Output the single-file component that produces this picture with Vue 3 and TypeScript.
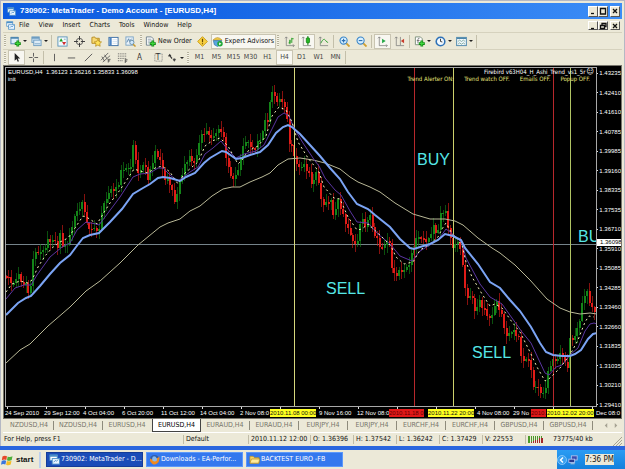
<script setup lang="ts">
import { ref } from 'vue'

type Point = [number, number]
interface Tool { icon: string; name: string; label?: string; drop?: boolean; pressed?: boolean; kind?: 'grip' | 'sep' }

const icons: Record<string, string> = {
  app: '<rect x="1" y="1" width="8" height="6" fill="#fff" stroke="#4a8fc8"/><rect x="1" y="1" width="8" height="2" fill="#4a8fc8"/><rect x="3.5" y="5" width="8" height="6" fill="#e8f4ff" stroke="#4a8fc8"/><path d="M5 9l2-2 1 1 2-2" stroke="#4a8fc8" fill="none"/>',
  newChart: '<rect x="1" y="1.500" width="8" height="7" fill="#dbeefb" stroke="#4e86b0"/><path d="M1 2h8" stroke="#4e86b0" stroke-width="2"/><path d="M8.500 5v6.500M5.200 8.200h6.600" stroke="#178a17" stroke-width="3"/><path d="M8.500 5.700v5M6 8.200h5" stroke="#3dd83d" stroke-width="1.300"/>',
  profiles: '<rect x="1" y="1" width="8" height="6" fill="#cfe4f4" stroke="#6d9cc0"/><path d="M1 2h8" stroke="#6d9cc0" stroke-width="2"/><rect x="3" y="4.500" width="8" height="6" fill="#dcebf6" stroke="#6d9cc0"/><path d="M4 8.500h6" stroke="#7da7c6"/>',
  market: '<rect x="1" y="1" width="10" height="10" fill="#f4faff" stroke="#5a94b8"/><path d="M2.500 6l2-3.500L6.500 6z" fill="#20a020"/><path d="M5.500 6.500h4.500L7.700 10z" fill="#d03030"/><path d="M7.500 3.500h2" stroke="#7aa"/>',
  cross: '<circle cx="6" cy="6" r="3.500" fill="none" stroke="#555"/><path d="M6 0v4.500M6 7.500V12M0 6h4.500M7.500 6H12" stroke="#333"/>',
  folder: '<path d="M1 1.500V8h8V2.500H5L4 1z" fill="#f7d873" stroke="#b58a1c"/><path d="M7.500 3.500l1.300 2.600 2.700.400-2 1.900.500 2.800-2.500-1.400L5 11.200l.500-2.800-2-1.900 2.700-.400z" fill="#ffe25a" stroke="#b58a1c" stroke-width=".8"/>',
  navigator: '<rect x="1" y="1.500" width="10" height="9" fill="#fff" stroke="#3a6ea5"/><rect x="1.500" y="2" width="2.500" height="8" fill="#4b84c4"/><path d="M5 4h5M5 6h5M5 8h5" stroke="#d5e4f2"/>',
  tester: '<rect x="1" y="1" width="8" height="9" fill="#e8f2fa" stroke="#7aa3c4"/><path d="M2 7l2-4 1 3 2-3" stroke="#5b84a8" fill="none"/><circle cx="7.500" cy="7" r="2.300" fill="#cfe9ff" stroke="#6a8ea8"/><path d="M9 9l2.500 2.500" stroke="#c99a2e" stroke-width="1.600"/>',
  order: '<path d="M1.500 1h5.500l2 2v7H1.500z" fill="#fff" stroke="#6b7f8c"/><path d="M3 3.500h4M3 5.500h4M3 7.500h3" stroke="#8ca0ad"/><path d="M8.500 5v6.500M5.200 8.200h6.600" stroke="#178a17" stroke-width="3"/><path d="M8.500 5.700v5M6 8.200h5" stroke="#3dd83d" stroke-width="1.300"/>',
  alert: '<path d="M6 .7L11.300 6 6 11.300.7 6z" fill="#f8d040" stroke="#c89a10"/><path d="M6 3v3.800M6 7.800V9" stroke="#6a4a00" stroke-width="1.300"/>',
  expert: '<path d="M1 4.500Q6-1 11 4.500z" fill="#f0cc4a" stroke="#b8902a" stroke-width=".7"/><path d="M1.500 5h9L9 9.500 6 11.500 2.500 9.500z" fill="#5aa6e0" stroke="#2f6fa8" stroke-width=".7"/><circle cx="8.700" cy="8.500" r="3" fill="#20a838"/><path d="M7.800 7v3l2.500-1.500z" fill="#fff"/>',
  bars: '<path d="M2.500 1v9.500H11M1 2.500l1.500-1.500L4 2.500M9.700 9l1.500 1.500L9.700 12" stroke="#777" fill="none" stroke-width=".8"/><path d="M5 7.500h1.500V4.500M6.500 4v5M8.500 2v5.500M8.500 3h2" stroke="#1c9a1c" fill="none"/>',
  candles: '<path d="M2.500 1v9.500H11M1 2.500l1.500-1.500L4 2.500" stroke="#777" fill="none" stroke-width=".8"/><path d="M7.500 0v10" stroke="#0d7a0d"/><rect x="5.800" y="2" width="3.500" height="5.500" rx="1" fill="#25b825" stroke="#0d7a0d" stroke-width=".8"/>',
  line: '<path d="M2.500 1v9.500H11M1 2.500l1.500-1.500L4 2.500" stroke="#777" fill="none" stroke-width=".8"/><path d="M3 8Q6 1.500 8 4.500T11 7" stroke="#35a035" fill="none"/>',
  zoomIn: '<path d="M7.500 7.500l4 4" stroke="#d0a030" stroke-width="2"/><circle cx="5" cy="5" r="3.900" fill="#d8f0ff" stroke="#3b86c8" stroke-width="1.200"/><path d="M5 3v4M3 5h4" stroke="#2b6eb0" stroke-width="1.200"/>',
  zoomOut: '<path d="M7.500 7.500l4 4" stroke="#d0a030" stroke-width="2"/><circle cx="5" cy="5" r="3.900" fill="#d8f0ff" stroke="#3b86c8" stroke-width="1.200"/><path d="M3 5h4" stroke="#2b6eb0" stroke-width="1.200"/>',
  scroll: '<path d="M2.500 1v9.500H11M1 2.500l1.500-1.500L4 2.500M10 9.200l1.300 1.300L10 11.800" stroke="#777" fill="none" stroke-width=".8"/><path d="M5.500 3v5l4-2.500z" fill="#28a848"/>',
  shift: '<path d="M2.500 1v9.500H11M1 2.500l1.500-1.500L4 2.500M7 1v9" stroke="#777" fill="none" stroke-width=".8"/><path d="M11 3v5L7.500 5.500z" fill="#c83a2a"/>',
  indicator: '<path d="M1.500 1h5.500l2 2v6.500H1.500z" fill="#fff" stroke="#7a8c7a"/><path d="M6 2.500Q4.500 2 4.300 4v4M3 5h3" stroke="#555" fill="none" stroke-width=".8"/><path d="M8.500 5v6.500M5.200 8.200h6.600" stroke="#178a17" stroke-width="3"/><path d="M8.500 5.700v5M6 8.200h5" stroke="#3dd83d" stroke-width="1.300"/>',
  clock: '<circle cx="6" cy="6" r="4.700" fill="#f2f9ff" stroke="#2e72b8" stroke-width="1.700"/><path d="M6 3v3l2 .5" stroke="#333" fill="none"/>',
  template: '<rect x=".7" y="1.500" width="10.600" height="9" fill="#eef6fb" stroke="#4d87ab"/><path d="M1 2.500h10" stroke="#4d87ab" stroke-width="1.500"/><path d="M2 6l2-1.500L6 6l2-1.500L10 6M2 9l2-1.500L6 9l2-1.500L10 9" stroke="#6a9a8a" fill="none" stroke-width=".8"/>',
  cursor: '<path d="M4 1v8.500l2-1.800 1.300 3 1.400-.7-1.300-2.800H10z" fill="#222"/>',
  plus: '<path d="M6 1v4M6 7v4M1 6h4M7 6h4" stroke="#555"/>',
  vline: '<path d="M6 2v8" stroke="#555"/>',
  hline: '<path d="M2 6.500h8" stroke="#555"/>',
  trend: '<path d="M2 10l8-8" stroke="#555"/>',
  channel: '<path d="M1 9l8-8M3 11l8-7M2 5l3 5M5 3l3 5" stroke="#555" fill="none" stroke-width=".9"/><path d="M9 8h2.500M9 8v3.500M9 9.700h2" stroke="#333" fill="none" stroke-width=".8"/>',
  fibo: '<path d="M1 2h10M1 4.500h10M1 7h10M1 9.500h6" stroke="#555" stroke-dasharray="1 1"/><path d="M9 8.500h2.500M9 8v4M9 10h2" stroke="#333" fill="none" stroke-width=".8"/>',
  arrows: '<path d="M1 4.500L3 2l2 2.500H4L6 6.500 5 7.500 3 5z" fill="#333"/><path d="M6 8h1V7h2v1h1l-2 2.500z" fill="#444"/>',
  box: '<rect x="2" y="2" width="8" height="8" fill="none" stroke="#777" stroke-dasharray="1 1"/>',
  browser: '<circle cx="6" cy="6" r="5" fill="#315da8"/><path d="M1.200 4.500Q3 7 6 5.500L10 4l1-1.500Q12.500 8 8.500 10.700T1 7.500z" fill="#f28a1c"/><path d="M4 3Q7 1.500 8.500 5T5 8Q2.500 7 4 3z" fill="#86b8ee"/>',
  directory: '<path d="M1 10V2.500h3.500L6 4h5v6z" fill="#f4d264" stroke="#b08820" stroke-width=".7"/><path d="M1 10l1.700-4.500h9L10.500 10z" fill="#ffeb9a" stroke="#b08820" stroke-width=".7"/>',
}

const main: Tool[] = [
  { icon: '', name: 'g1', kind: 'grip' },
  { icon: 'newChart', name: 'New chart', drop: true },
  { icon: 'profiles', name: 'Profiles', drop: true },
  { icon: '', name: 's1', kind: 'sep' },
  { icon: 'market', name: 'Market watch' },
  { icon: 'cross', name: 'Data window' },
  { icon: 'folder', name: 'Navigator' },
  { icon: 'navigator', name: 'Terminal' },
  { icon: 'tester', name: 'Strategy tester' },
  { icon: '', name: 'g2', kind: 'grip' },
  { icon: 'order', name: 'New Order', label: 'New Order' },
  { icon: 'alert', name: 'MetaEditor' },
  { icon: 'expert', name: 'Expert Advisors', label: 'Expert Advisors', pressed: true },
  { icon: '', name: 'g3', kind: 'grip' },
  { icon: 'bars', name: 'Bar chart' },
  { icon: 'candles', name: 'Candlesticks', pressed: true },
  { icon: 'line', name: 'Line chart' },
  { icon: '', name: 's3', kind: 'sep' },
  { icon: 'zoomIn', name: 'Zoom in' },
  { icon: 'zoomOut', name: 'Zoom out' },
  { icon: '', name: 's4', kind: 'sep' },
  { icon: 'scroll', name: 'Auto scroll', pressed: true },
  { icon: 'shift', name: 'Chart shift' },
  { icon: '', name: 's5', kind: 'sep' },
  { icon: 'indicator', name: 'Indicators', drop: true },
  { icon: 'clock', name: 'Periods', drop: true },
  { icon: 'template', name: 'Templates', drop: true },
  { icon: '', name: 's6', kind: 'sep' },
]

const drawing: Tool[] = [
  { icon: '', name: 'g1', kind: 'grip' },
  { icon: 'cursor', name: 'Cursor', pressed: true },
  { icon: 'plus', name: 'Crosshair' },
  { icon: '', name: 's1', kind: 'sep' },
  { icon: 'vline', name: 'Vertical line' },
  { icon: 'hline', name: 'Horizontal line' },
  { icon: 'trend', name: 'Trendline' },
  { icon: 'channel', name: 'Channel' },
  { icon: 'fibo', name: 'Fibonacci' },
  { icon: '', name: 'Text', label: 'A' },
  { icon: 'box', name: 'Text label', label: 'T' },
  { icon: 'arrows', name: 'Arrows', drop: true },
  { icon: '', name: 'g2', kind: 'grip' },
]

const menus = ['File', 'View', 'Insert', 'Charts', 'Tools', 'Window', 'Help']
const periods = ['M1', 'M5', 'M15', 'M30', 'H1', 'H4', 'D1', 'W1', 'MN']
const period = ref('H4')
const tabs = ['NZDUSD,H4', 'NZDUSD,H4', 'EURUSD,H4', 'EURUSD,H4', 'EURAUD,H4', 'EURAUD,H4', 'EURJPY,H4', 'EURJPY,H4', 'EURCHF,H4', 'EURCHF,H4', 'GBPUSD,H4', 'GBPUSD,H4']
const activeTab = ref(3)
const prices = ['1.43235', '1.42410', '1.41610', '1.40785', '1.39985', '1.39160', '1.38335', '1.37535', '1.36710', '1.35910', '1.35085', '1.34285', '1.33460', '1.32660', '1.31835', '1.31035', '1.30210', '1.29410']

const area = { x: 6, y: 68, w: 590, h: 338 }
const left = (x: number) => ({ left: `${((x - area.x) / area.w) * 100}%` })
const place = (x: number, y: number) => ({ ...left(x), top: `${((y - area.y) / area.h) * 100}%` })

const times: { x: number; text: string; tone?: string }[] = [
  { x: 5, text: '24 Sep 2010' }, { x: 44, text: '29 Sep 12:00' }, { x: 83, text: '4 Oct 04:00' },
  { x: 122, text: '6 Oct 20:00' }, { x: 161, text: '11 Oct 12:00' }, { x: 200, text: '14 Oct 04:00' },
  { x: 240, text: '2 Nov 08:0' }, { x: 319, text: '9 Nov 16:00' }, { x: 357, text: '12 Nov 08:0' },
  { x: 477, text: '4 Nov 08:00' }, { x: 513, text: '29 No' }, { x: 596, text: 'Dec 08:0' },
  { x: 270, text: '2010.11.08 00:00', tone: 'yellow' },
  { x: 389, text: '2010.11.18 0', tone: 'red' }, { x: 428, text: '2010.11.22 20:00', tone: 'yellow' },
  { x: 531, text: '2010.', tone: 'red' }, { x: 547, text: '2010.12.02 20:00', tone: 'yellow' },
]
const ticks = Array.from({ length: 16 }, (_, i) => 7 + i * 39)

const notes = [
  { x: 417, y: 160, text: 'BUY' }, { x: 326, y: 289, text: 'SELL' },
  { x: 472, y: 353, text: 'SELL' }, { x: 578, y: 237, text: 'BUY' },
]
const verticals = [
  { x: 294, tone: '#d5d67c' }, { x: 414, tone: '#b8282c' }, { x: 453, tone: '#ccd06c' },
  { x: 553, tone: '#b8282c' }, { x: 570, tone: '#b0c464' },
]

const slow = '6,363 20,350 30,344 48,326 70,307 86,291 100,281 120,263 138,245 160,227 168,223 180,219 190,211 200,206 212,196 223,189 232,187 240,187 250,182 262,177 270,173 278,165 288,159 300,158 313,160 325,163 340,169 350,177 358,182 370,187 380,192 395,203 413,214 430,219 445,219 455,221 463,225 478,238 492,248 500,253 515,265 530,280 547,299 560,308 570,312 580,314 590,313 597,314'
const trend = '6,315 10,311 18,303 26,298 31,296 40,286 50,274 60,263 70,255 76,247 83,238 90,235 99,233 110,222 122,209 133,194 143,188 150,184 158,178 163,177 170,178 180,181 186,177 195,173 204,163 210,158 222,151 226,152 236,159 242,158 250,155 260,152 268,145 276,133 283,127 288,125 292,127 300,134 310,145 320,156 330,168 340,179 348,192 357,204 368,209 375,215 390,227 400,239 410,248 414,249 420,247 430,244 438,240 445,234 453,236 461,240 465,248 478,264 490,282 500,288 510,300 520,311 531,327 540,343 546,352 553,355 562,356 570,356 575,354 581,350 588,339 593,334 597,333'
const signal = '6,299 15,288 24,285 31,285 37,275 50,257 62,247 70,243 77,230 86,222 96,224 99,225 108,213 120,197 133,177 140,174 150,173 158,168 163,168 170,175 178,181 190,172 198,167 205,154 213,148 221,141 228,150 236,158 244,154 256,151 264,145 270,133 278,117 284,113 289,116 294,128 303,143 315,161 319,166 325,178 335,190 341,195 350,211 357,222 368,223 378,234 390,244 400,256 412,261 420,251 430,245 438,240 446,229 450,232 455,236 462,243 466,258 480,284 490,297 497,301 502,304 512,318 522,332 531,343 538,358 545,373 549,375 556,367 562,365 571,354 578,348 585,331 590,324 594,323 597,324'
const fast = '6,292 12,284 20,281 28,283 32,280 38,267 45,256 52,248 60,242 68,238 73,231 83,216 88,218 97,224 103,214 110,203 120,190 130,175 134,169 140,171 148,173 155,168 162,166 170,172 178,184 184,174 192,167 198,162 205,146 212,141 220,138 228,146 238,164 242,160 248,151 258,146 266,136 272,116 279,107 286,110 292,122 298,142 308,158 316,168 319,172 324,187 334,198 340,199 348,217 357,230 362,229 368,224 380,235 391,246 396,257 404,264 413,262 420,250 430,244 438,237 442,229 446,223 451,232 455,237 462,245 466,262 472,277 482,294 490,306 495,304 502,308 512,322 520,332 530,352 537,367 545,381 550,378 560,368 571,353 578,340 585,322 589,316 594,317'

const closes: Point[] = [[6, 276], [10, 280], [14, 286], [17, 272], [21, 283], [26, 285], [29, 295], [32, 280], [33, 253], [38, 252], [43, 251], [48, 240], [55, 241], [58, 249], [60, 232], [63, 250], [68, 240], [71, 233], [73, 218], [78, 210], [81, 202], [85, 212], [87, 228], [95, 229], [99, 231], [101, 212], [106, 198], [110, 190], [117, 189], [121, 170], [125, 168], [130, 169], [133, 146], [135, 148], [136, 178], [140, 170], [144, 163], [148, 180], [152, 162], [155, 152], [160, 160], [164, 178], [170, 184], [175, 203], [178, 188], [183, 168], [188, 157], [195, 163], [199, 140], [203, 132], [208, 133], [212, 140], [215, 132], [222, 130], [226, 160], [231, 178], [235, 178], [240, 160], [243, 143], [248, 142], [253, 151], [258, 142], [262, 135], [263, 120], [267, 121], [270, 100], [273, 85], [275, 103], [278, 99], [283, 103], [286, 112], [288, 140], [293, 150], [297, 168], [303, 165], [308, 172], [312, 186], [317, 168], [320, 200], [325, 205], [330, 198], [333, 215], [338, 200], [344, 220], [349, 232], [355, 246], [359, 235], [361, 212], [365, 230], [369, 211], [372, 228], [378, 243], [382, 250], [386, 240], [390, 246], [392, 272], [395, 276], [400, 270], [405, 270], [409, 262], [413, 248], [417, 236], [424, 240], [429, 240], [432, 224], [437, 236], [441, 210], [445, 212], [449, 234], [452, 248], [457, 242], [461, 250], [463, 276], [467, 300], [471, 292], [475, 315], [478, 300], [483, 308], [488, 318], [491, 318], [495, 300], [500, 310], [506, 337], [512, 330], [518, 336], [522, 362], [528, 358], [534, 390], [539, 385], [541, 397], [545, 388], [549, 365], [553, 360], [558, 360], [561, 350], [567, 372], [568, 340], [574, 338], [580, 318], [583, 297], [586, 290], [590, 305], [594, 312], [596, 323]]

function priceAt(x: number): number {
  for (let i = 1; i < closes.length; i++) {
    const [x0, y0] = closes[i - 1]
    const [x1, y1] = closes[i]
    if (x <= x1) return y0 + ((y1 - y0) * (x - x0)) / (x1 - x0)
  }
  return closes[closes.length - 1][1]
}

const candles = Array.from({ length: 242 }, (_, i) => {
  const x = 6 + i * 2.44
  const open = priceAt(Math.max(6, x - 2.44)) + Math.sin(i * 2.7) * 2
  const close = priceAt(x) + Math.sin((i + 1) * 2.7) * 2
  const top = Math.min(open, close)
  const size = Math.max(1.5, Math.abs(open - close))
  const up = 1 + Math.abs(Math.sin(i * 7.3)) * 7
  const down = 1 + Math.abs(Math.sin(i * 4.1)) * 7
  return { x, top, size, high: Math.max(83, top - up), low: Math.min(399, top + size + down), tone: close < open ? '#138518' : '#e01c18' }
})
</script>

<template>
  <div class="desktop">
    <main class="window">
      <header class="title">
        <svg class="icon" viewBox="0 0 12 12" v-html="icons.app"></svg>
        <h1>730902: MetaTrader - Demo Account - [EURUSD,H4]</h1>
        <div class="controls">
          <button aria-label="Minimize"><svg viewBox="0 0 8 8"><path d="M2 6.500h3" /></svg></button>
          <button aria-label="Maximize"><svg viewBox="0 0 8 8"><path d="M1 1.500h6M1.500 1v6h5V1" /></svg></button>
          <button class="close" aria-label="Close"><svg viewBox="0 0 8 8"><path d="M2 2l4 4M6 2L2 6" /></svg></button>
        </div>
      </header>

      <nav class="menu">
        <svg class="icon" viewBox="0 0 12 12" v-html="icons.app"></svg>
        <button v-for="m in menus" :key="m">{{ m }}</button>
        <div class="controls">
          <button aria-label="Minimize chart"><svg viewBox="0 0 8 8"><path d="M2 6.500h3" /></svg></button>
          <button aria-label="Restore chart"><svg viewBox="0 0 8 8"><path d="M3 3V1.500h4v3H5.500M1.500 3.500h4v3h-4z" /></svg></button>
          <button class="close" aria-label="Close chart"><svg viewBox="0 0 8 8"><path d="M2 2l4 4M6 2L2 6" /></svg></button>
        </div>
      </nav>

      <div class="toolbar">
        <template v-for="t in main" :key="t.name">
          <i v-if="t.kind" :class="t.kind"></i>
          <button v-else :class="['tool', { pressed: t.pressed, drop: t.drop, wide: t.label }]" :aria-label="t.name">
            <svg class="icon" viewBox="0 0 12 12" v-html="icons[t.icon]"></svg>
            <span v-if="t.label">{{ t.label }}</span>
            <b v-if="t.drop" class="caret"></b>
          </button>
        </template>
      </div>

      <div class="toolbar second">
        <template v-for="t in drawing" :key="t.name">
          <i v-if="t.kind" :class="t.kind"></i>
          <button v-else :class="['tool', { pressed: t.pressed, drop: t.drop }]" :aria-label="t.name">
            <svg v-if="t.icon" class="icon" viewBox="0 0 12 12" v-html="icons[t.icon]"></svg>
            <span v-if="t.label" :class="['glyph', { over: t.icon }]">{{ t.label }}</span>
            <b v-if="t.drop" class="caret"></b>
          </button>
        </template>
        <button v-for="p in periods" :key="p" :class="['tool', 'period', { pressed: p === period }]" @click="period = p">{{ p }}</button>
        <i class="sep"></i>
      </div>

      <section class="chart">
        <div class="plot">
          <svg class="drawing" viewBox="6 68 590 338" preserveAspectRatio="none" role="img" aria-label="EURUSD H4 candles">
            <rect x="6" y="244" width="590" height="1" fill="#75838a" />
            <g shape-rendering="crispEdges">
              <template v-for="(c, i) in candles" :key="i">
                <rect :x="c.x" :y="c.high" width="1" :height="c.low - c.high" :fill="c.tone" opacity="0.6" />
                <rect :x="c.x - 0.5" :y="c.top" width="2" :height="c.size" :fill="c.tone" />
              </template>
              <rect v-for="v in verticals" :key="v.x" :x="v.x" y="68" width="1" height="338" :fill="v.tone" />
            </g>
            <polyline :points="slow" stroke="#b9b897" />
            <polyline :points="signal" stroke="#5a35a0" />
            <polyline :points="fast" stroke="#f2f0b8" stroke-dasharray="2 3" />
            <polyline :points="trend" stroke="#7ba4f4" stroke-width="2" />
          </svg>
          <p class="quote">EURUSD,H4&nbsp; 1.36123 1.36216 1.35833 1.36098<br />init</p>
          <p class="advisor">Firebird v63H04_H_Ashi_Trend_vs1_5r<span class="face">☺</span></p>
          <p class="alerts"><span>Trend Alerter ON:</span><span>Trend watch OFF.</span><span>Emails OFF.</span><span>Popup OFF.</span></p>
          <span v-for="n in notes" :key="n.x" class="note" :style="place(n.x, n.y)">{{ n.text }}</span>
        </div>
        <div class="times">
          <i v-for="t in ticks" :key="t" class="tick" :style="left(t)"></i>
          <span v-for="t in times" :key="t.x" :class="['time', t.tone]" :style="left(t.x)">{{ t.text }}</span>
        </div>
        <div class="prices">
          <span v-for="p in prices" :key="p">{{ p }}</span>
          <strong>1.36098</strong>
        </div>
      </section>

      <nav class="tabs">
        <button v-for="(t, i) in tabs" :key="i" :class="{ active: i === activeTab, before: i === activeTab - 1 }" @click="activeTab = i">{{ t }}</button>
        <div class="pager">
          <button aria-label="Previous tabs"><svg viewBox="0 0 4 6"><path d="M3.500 0v6L.5 3z" /></svg></button>
          <button aria-label="Next tabs"><svg viewBox="0 0 4 6"><path d="M.5 0v6l3-3z" /></svg></button>
        </div>
      </nav>

      <footer class="status">
        <span class="help">For Help, press F1</span>
        <span class="profile">Default</span>
        <span class="stamp">2010.11.12 12:00</span>
        <span>O: 1.36396</span>
        <span>H: 1.37542</span>
        <span>L: 1.36242</span>
        <span>C: 1.37429</span>
        <span>V: 22553</span>
        <span class="traffic">
          <svg viewBox="0 0 15 7"><path d="M0 0h2v7H0zM3 0h1v6H3zM5 0h1v5H5zM7 0h1v5H7zM9 0h1v4H9zM11 0h1v3h-1zM13 0h1v2h-1z" fill="#4a9a2a" /><path d="M3 6h1v1H3zM5 5h1v2H5zM7 4h1v3H7zM9 4h1v3H9zM11 2h1v5h-1zM13 2h2v5h-2z" fill="#a3262a" /></svg>
          73775/40 kb
        </span>
        <svg class="resize" viewBox="0 0 10 10"><path d="M10 1l-9 9M10 4l-6 6M10 7l-3 3" /></svg>
      </footer>
    </main>

    <div class="taskbar">
      <button class="start">
        <svg viewBox="0 0 12 12"><path d="M1.500 2.500Q3.500 1 6 2.200L5.300 6Q3 5 .8 6.300z" fill="#e5482a" /><path d="M6.700 2.400Q9 3.500 11.500 2.200L10.700 6Q8.500 7.300 6 6.200z" fill="#4db038" /><path d="M.7 7Q3 5.700 5.200 6.800L4.400 10.500Q2 9.300 0 10.800z" fill="#3a76dc" /><path d="M5.900 7Q8.200 8 10.500 6.800L9.700 10.600Q7.300 12 5.100 10.700z" fill="#f5bd22" /></svg>
        start
      </button>
      <i class="divider"></i>
      <button class="task current"><svg class="icon" viewBox="0 0 12 12" v-html="icons.app"></svg>730902: MetaTrader - D...</button>
      <button class="task"><svg class="icon" viewBox="0 0 12 12" v-html="icons.browser"></svg>Downloads - EA-Perfor...</button>
      <button class="task"><svg class="icon" viewBox="0 0 12 12" v-html="icons.directory"></svg>BACKTEST EURO -FB</button>
      <div class="tray">
        <button aria-label="Show hidden icons"><svg viewBox="0 0 10 10"><circle cx="5" cy="5" r="4.500" fill="#3aa0f0" stroke="#9fd4ff" stroke-width=".7" /><path d="M6 2.500L3.500 5 6 7.500" fill="none" stroke="#fff" stroke-width="1.400" /></svg></button>
        <svg class="network" viewBox="0 0 12 12"><rect x="4" y="1" width="7" height="5" fill="#3b4cae" stroke="#b8c8f0" /><rect x="1" y="5" width="7" height="4" fill="#28388c" stroke="#b8c8f0" /><path d="M3 10.500h5" stroke="#d8d8d8" /></svg>
        <time>7:36 PM</time>
      </div>
    </div>
  </div>
</template>

<style>
body { margin: 0; }
</style>

<style scoped>
.desktop {
  display: flex;
  flex-direction: column;
  min-height: 100vh;
  background: #2a66de;
  font: 7px/9px "DejaVu Sans Condensed", "DejaVu Sans", sans-serif;
  color: #111;
  overflow: hidden;
}
button { all: unset; box-sizing: border-box; cursor: default; white-space: nowrap; }
p, h1 { margin: 0; }
svg { display: block; flex: none; }
.icon { width: 11px; height: 11px; }
.window {
  flex: 1;
  display: flex;
  flex-direction: column;
  box-sizing: border-box;
  margin-bottom: 4px;
  padding: 2px 2px 0;
  border: 1px solid #b4b8c4;
  border-bottom: 0;
  background: #ece9d8;
}
.title {
  display: flex;
  align-items: center;
  gap: 4px;
  height: 16px;
  padding: 0 2px 0 4px;
  background: linear-gradient(90deg, #0d5ce0, #1566e6 35%, #3c8df6);
}
.title .icon, .menu .icon { width: 9px; height: 9px; }
h1 { font: bold 8px/12px "Liberation Sans", sans-serif; color: #fff; white-space: nowrap; }
.controls { display: flex; margin-left: auto; }
.controls button {
  width: 10px;
  height: 11px;
  display: flex;
  align-items: center;
  justify-content: center;
  background: #ece9d8;
  border: 1px solid;
  border-color: #fff #555 #555 #fff;
}
.controls .close { margin-left: 2px; }
.controls svg { width: 8px; height: 8px; fill: none; stroke: #111; stroke-width: 1.300; }
.menu { display: flex; align-items: center; gap: 9px; height: 13px; padding: 0 2px 0 3px; }
.menu .icon { margin-right: -5px; }
.menu .controls button { height: 9px; }
.toolbar {
  display: flex;
  align-items: center;
  height: 17px;
  box-sizing: border-box;
  border-top: 1px solid #d6d2be;
}
.toolbar.second { height: 16px; }
.tool { display: flex; align-items: center; justify-content: center; width: 17px; height: 15px; }
.tool.drop { width: 21px; gap: 2px; }
.tool.wide { width: auto; gap: 2px; padding: 0 2px 0 1px; }
.tool.pressed { background: #f8f7f1; box-shadow: inset 0 0 0 1px #c9c5b2; }
.tool.period { color: #444; }
.caret { border: 2px solid transparent; border-top-color: #222; border-bottom: 0; }
.glyph { font-size: 8px; color: #333; }
.glyph.over { margin-left: -8px; }
.grip { width: 2px; height: 12px; margin: 0 2px 0 1px; background: repeating-linear-gradient(#b5b19c 0 1px, #f6f4ea 1px 2px); }
.sep { width: 1px; height: 13px; margin: 0 2px 0 1px; background: #c3bfaa; }
.chart {
  flex: 1;
  display: grid;
  grid-template-columns: 1fr 24px;
  grid-template-rows: 1fr 11px;
  padding: 1px 0 0 1px;
  border: 1px solid #77756c;
  background: #000;
  color: #fff;
  overflow: hidden;
}
.plot { position: relative; min-height: 0; border: 1px solid #a8a8a8; overflow: hidden; }
.drawing { position: absolute; inset: 0; width: 100%; height: 100%; fill: none; }
.quote { position: absolute; left: 2px; top: 1px; font: 6px/7px "Liberation Sans", sans-serif; }
.advisor { position: absolute; right: 2px; top: 0; display: flex; align-items: center; gap: 1px; font-size: 6px; line-height: 7px; }
.face { font-size: 8px; }
.alerts { position: absolute; right: 6px; top: 7px; display: flex; gap: 10px; font-size: 6px; line-height: 7px; color: #e2e27a; }
.note { position: absolute; font: 16px/16px "Liberation Sans", sans-serif; color: #55e6e6; transform: translateY(-50%); }
.times { position: relative; margin: 0 1px; font: 6px/8px "Liberation Sans", sans-serif; }
.tick { position: absolute; top: 0; width: 1px; height: 2px; background: #ddd; }
.time { position: absolute; top: 2px; white-space: nowrap; }
.yellow { background: #ffff20; color: #111; }
.red { background: #e01818; color: #5c0000; }
.prices {
  grid-area: 1 / 2 / 3 / 3;
  position: relative;
  display: flex;
  flex-direction: column;
  justify-content: space-between;
  padding: 2px 0 9px;
  font: 6px/8px "Liberation Sans", sans-serif;
}
.prices span { display: flex; align-items: center; gap: 1px; }
.prices span::before { content: ""; width: 2px; height: 1px; background: #ddd; }
.prices strong { position: absolute; top: 49%; left: 0; right: 0; padding-left: 3px; line-height: 7px; background: #fff; color: #000; font-weight: normal; }
.tabs { display: flex; align-items: center; height: 13px; padding-left: 2px; color: #77756a; }
.tabs > button { flex: 0 1 49px; line-height: 9px; text-align: center; border-right: 1px solid #8e8b7c; }
.tabs > button.before { border-color: transparent; }
.tabs > button.active { align-self: stretch; line-height: 11px; background: #fff; color: #000; border: 1px solid #444; border-top: 0; }
.pager { display: flex; gap: 6px; margin-left: auto; padding-right: 4px; }
.pager svg { width: 4px; height: 5px; fill: #a5a293; }
.status { display: flex; align-items: center; height: 14px; border-top: 1px solid #fff; box-sizing: border-box; white-space: nowrap; }
.status > span { flex: 0 1 43px; box-sizing: border-box; padding-left: 2px; border-left: 1px solid #c0bca8; }
.status .help { flex-basis: 180px; padding-left: 1px; border: 0; }
.status .profile { flex-basis: 65px; }
.status .stamp { flex-basis: 62px; }
.status .traffic { flex: 1; display: flex; align-items: center; gap: 10px; }
.traffic svg { width: 15px; height: 7px; }
.resize { width: 10px; height: 10px; align-self: flex-end; fill: none; stroke: #a8a493; }
.taskbar { display: flex; align-items: center; height: 19px; background: #ece9d8; }
.start { display: flex; align-items: center; gap: 3px; width: 37px; padding-left: 1px; font: bold 8px/10px "Liberation Sans", sans-serif; }
.start svg { width: 12px; height: 12px; }
.divider { width: 2px; height: 16px; margin: 0 5px 0 2px; background: #bdd0ee; }
.task {
  display: flex;
  align-items: center;
  gap: 1px;
  flex: 0 1 97px;
  height: 15px;
  margin-right: 3px;
  padding-left: 2px;
  background: #3478ee;
  border: 1px solid #5c98fa;
  color: #fff;
}
.task.current { background: #1a4cb8; border-color: #143c98; }
.tray { display: flex; align-items: center; gap: 1px; flex: 0 0 68px; height: 19px; margin-left: auto; background: linear-gradient(#2a9cf4, #1480dc); }
.tray svg { width: 10px; height: 10px; }
.tray time { margin-left: 6px; background: #ece9d8; font-size: 8px; line-height: 11px; white-space: nowrap; }
</style>
